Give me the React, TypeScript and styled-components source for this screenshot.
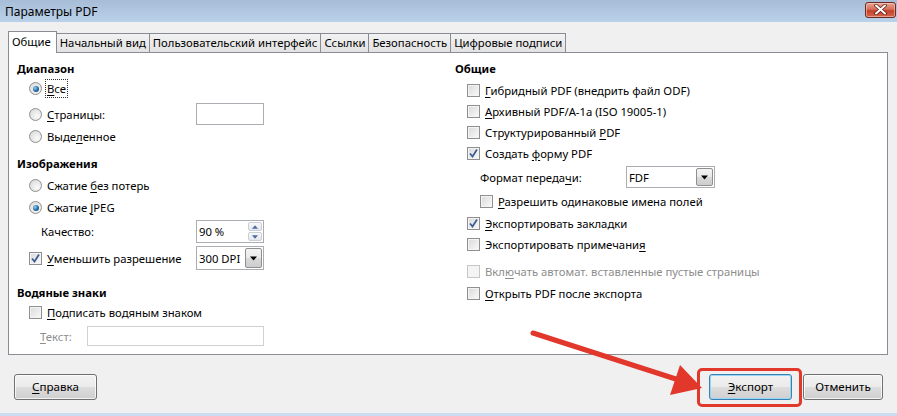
import * as React from "react"
import styled, { createGlobalStyle, css } from "styled-components"

const GlobalStyle = createGlobalStyle`
  html, body {
    margin: 0;
    padding: 0;
    background: #f0f0f0;
  }
  body {
    font-family: "Noto Sans", "Liberation Sans", sans-serif;
    font-size: 11.3px;
    color: #000;
  }
  u {
    text-decoration: underline;
    text-underline-offset: 2px;
  }
`

const Window = styled.div`
    position: relative;
    width: 897px;
    height: 416px;
    display: flex;
    flex-direction: column;
    overflow: hidden;
    background: #f0f0f0;
`

const TitleBar = styled.div`
    height: 22px;
    flex: 0 0 22px;
    display: flex;
    align-items: center;
    justify-content: space-between;
    padding: 0 1px 0 5px;
    font-size: 12px;
    background: linear-gradient(#a7bdd7, #bad1ea);
`

const CloseButton = styled.div`
    width: 31px;
    height: 16px;
    margin-top: -3px;
    box-sizing: border-box;
    border: 1px solid #6b2a22;
    border-radius: 3px;
    display: flex;
    align-items: center;
    justify-content: center;
    background: linear-gradient(#e8a493 0%, #d66f59 45%, #c44129 55%, #d4654c 100%);
    box-shadow: inset 0 0 0 1px rgba(255, 220, 210, 0.5);
`

const Body = styled.div`
    flex: 1;
    display: flex;
    flex-direction: column;
    padding: 8px 9px 0 8px;
`

const TabStrip = styled.div`
    height: 22px;
    display: flex;
    align-items: flex-end;
`

const Tab = styled.div<{ $active?: boolean }>`
    position: relative;
    box-sizing: border-box;
    height: 19px;
    padding: 0 3px 1px;
    margin-left: -1px;
    display: flex;
    align-items: center;
    border: 1px solid #898c95;
    border-bottom: none;
    background: linear-gradient(#f2f2f2, #e2e2e2);
    white-space: nowrap;

    &:first-child {
        margin-left: 0;
    }

    ${p => p.$active && css`
        height: 22px;
        margin-bottom: -1px;
        padding: 0 5px 3px 3px;
        background: #fff;
        z-index: 1;
    `}
`

const Panel = styled.div`
    box-sizing: border-box;
    height: 303px;
    flex: 0 0 303px;
    display: grid;
    grid-template-columns: 438px 1fr;
    padding: 6px 8px 0 8px;
    background: #fff;
    border: 1px solid #898c95;
`

const Column = styled.div`
    display: flex;
    flex-direction: column;
`

const Heading = styled.div<{ $mt?: number }>`
    height: 18px;
    display: flex;
    align-items: center;
    font-weight: bold;
    margin-top: ${p => p.$mt || 0}px;
`

const Row = styled.div<{ $h?: number; $mt?: number; $indent?: number }>`
    height: ${p => p.$h || 21}px;
    margin-top: ${p => p.$mt || 0}px;
    padding-left: ${p => p.$indent ?? 12}px;
    display: flex;
    align-items: center;
    white-space: nowrap;
`

const Lead = styled.div<{ $w: number }>`
    flex: 0 0 ${p => p.$w}px;
    display: flex;
    align-items: center;
`

const Label = styled.span<{ $disabled?: boolean; $focus?: boolean }>`
    margin-left: 5px;
    color: ${p => (p.$disabled ? "#8d8d8d" : "#000")};
    ${p => p.$focus && css`
        outline: 1px dotted #333;
        outline-offset: 1px;
    `}
`

const PlainLabel = styled.span<{ $disabled?: boolean }>`
    color: ${p => (p.$disabled ? "#8d8d8d" : "#000")};
`

const CheckBox = styled.span<{ $disabled?: boolean }>`
    box-sizing: border-box;
    width: 13px;
    height: 13px;
    flex: 0 0 13px;
    display: inline-flex;
    align-items: center;
    justify-content: center;
    border: 1px solid ${p => (p.$disabled ? "#c6c6c6" : "#8e8f8f")};
    background: ${p => (p.$disabled ? "#f4f4f4" : "linear-gradient(135deg, #d9d9d9, #fafafa)")};
    box-shadow: inset 0 0 0 1px #f4f4f4;
`

const RadioDot = styled.span<{ $checked?: boolean }>`
    box-sizing: border-box;
    width: 13px;
    height: 13px;
    flex: 0 0 13px;
    border-radius: 50%;
    display: inline-flex;
    align-items: center;
    justify-content: center;
    border: 1px solid #8e8f8f;
    background: radial-gradient(circle at 65% 65%, #fbfbfb, #d4d4d4);

    &::after {
        content: "";
        display: ${p => (p.$checked ? "block" : "none")};
        width: 6px;
        height: 6px;
        border-radius: 50%;
        background: radial-gradient(circle at 35% 35%, #8fd0f5, #1e5f97 60%, #123b64);
    }
`

const Field = styled.div<{ $w: number; $h: number; $disabled?: boolean }>`
    box-sizing: border-box;
    width: ${p => p.$w}px;
    height: ${p => p.$h}px;
    display: flex;
    align-items: center;
    padding-left: 2px;
    border: 1px solid ${p => (p.$disabled ? "#cfd0d3" : "#abadb3")};
    background: #fff;
`

const FieldText = styled.span`
    flex: 1;
    min-width: 0;
    overflow: hidden;
    white-space: nowrap;
`

const SpinButtons = styled.div`
    width: 15px;
    height: 100%;
    box-sizing: border-box;
    padding: 1px 1px 1px 0;
    display: flex;
    flex-direction: column;
    gap: 1px;
`

const SpinHalf = styled.div`
    flex: 1;
    display: flex;
    align-items: center;
    justify-content: center;
    border: 1px solid #c9cfd8;
    border-radius: 2px;
    background: linear-gradient(#f7f8fa, #e4e7ec);
`

const DropButton = styled.div`
    box-sizing: border-box;
    width: 17px;
    flex: 0 0 17px;
    align-self: stretch;
    margin: 1px;
    display: flex;
    align-items: center;
    justify-content: center;
    border: 1px solid #8e8f8f;
    border-radius: 2px;
    background: linear-gradient(#f3f3f3 0%, #e9e9e9 50%, #d9d9d9 51%, #cdcdcd 100%);
`

const Footer = styled.div`
    display: flex;
    align-items: center;
    padding: 19px 5px 0 6px;
    gap: 11px;
`

const Button = styled.button<{ $w: number; $default?: boolean }>`
    box-sizing: border-box;
    width: ${p => p.$w}px;
    height: 26px;
    padding: 0 0 1px;
    font: inherit;
    font-size: 11.6px;
    color: #000;
    border: 1px solid ${p => (p.$default ? "#3c7fb1" : "#707070")};
    border-radius: 3px;
    background: linear-gradient(#f2f2f2 0%, #ebebeb 50%, #dddddd 51%, #cfcfcf 100%);
    box-shadow: inset 0 0 0 1px ${p => (p.$default ? "#94d6f7" : "rgba(255, 255, 255, 0.75)")};
`

const Highlight = styled.div`
    position: relative;
    display: flex;
    margin-left: auto;

    &::after {
        content: "";
        position: absolute;
        left: -12px;
        right: -10px;
        top: -6px;
        bottom: -7px;
        border: 3px solid #e2372b;
        border-radius: 5px;
        pointer-events: none;
    }
`

const BottomEdge = styled.div`
    height: 3px;
    flex: 0 0 3px;
    background: #cbdcf0;
`

const Overlay = styled.svg`
    position: absolute;
    left: 0;
    top: 0;
    pointer-events: none;
`

const Check: React.FC<{ checked?: boolean; disabled?: boolean }> = ({ checked, disabled }) => (
    <CheckBox $disabled={disabled}>
        {checked && (
            <svg width="11" height="11" viewBox="0 0 11 11">
                <path d="M2 5.5 L4.5 8.5 L9 1.5" fill="none" stroke="#3b5b93" strokeWidth="1.7" />
            </svg>
        )}
    </CheckBox>
)

const Triangle: React.FC<{ up?: boolean; color?: string; size?: number }> = ({ up, color = "#000", size = 7 }) => (
    <svg width={size} height={Math.ceil(size / 2) + 1} viewBox="0 0 7 4">
        <path d={up ? "M0 4 L3.5 0 L7 4 Z" : "M0 0 L7 0 L3.5 4 Z"} fill={color} />
    </svg>
)

const Select: React.FC<{ w: number; h: number; value: string }> = ({ w, h, value }) => (
    <Field $w={w} $h={h}>
        <FieldText>{value}</FieldText>
        <DropButton>
            <Triangle />
        </DropButton>
    </Field>
)

export default function App() {
    return (
        <Window>
            <GlobalStyle />
            <TitleBar>
                <span>Параметры PDF</span>
                <CloseButton>
                    <svg width="13" height="11" viewBox="0 0 13 11">
                        <path d="M2 1.5 L11 9.5 M11 1.5 L2 9.5" stroke="#5a2018" strokeWidth="3.6" strokeLinecap="round" />
                        <path d="M2 1.5 L11 9.5 M11 1.5 L2 9.5" stroke="#fff" strokeWidth="2" strokeLinecap="round" />
                    </svg>
                </CloseButton>
            </TitleBar>

            <Body>
                <TabStrip>
                    <Tab $active>Общие</Tab>
                    <Tab>Начальный вид</Tab>
                    <Tab>Пользовательский интерфейс</Tab>
                    <Tab>Ссылки</Tab>
                    <Tab>Безопасность</Tab>
                    <Tab>Цифровые подписи</Tab>
                </TabStrip>

                <Panel>
                    <Column>
                        <Heading>Диапазон</Heading>
                        <Row $mt={1}>
                            <RadioDot $checked />
                            <Label $focus><u>В</u>се</Label>
                        </Row>
                        <Row $h={22} $mt={4}>
                            <Lead $w={167}>
                                <RadioDot />
                                <Label><u>С</u>траницы:</Label>
                            </Lead>
                            <Field $w={68} $h={22} />
                        </Row>
                        <Row $mt={1}>
                            <RadioDot />
                            <Label>Выде<u>л</u>енное</Label>
                        </Row>

                        <Heading $mt={7}>Изображения</Heading>
                        <Row $mt={3}>
                            <RadioDot />
                            <Label>Сжатие <u>б</u>ез потерь</Label>
                        </Row>
                        <Row $mt={1}>
                            <RadioDot $checked />
                            <Label>Сжатие <u>J</u>PEG</Label>
                        </Row>
                        <Row $h={23} $mt={2} $indent={24}>
                            <Lead $w={155}>
                                <PlainLabel>Качество:</PlainLabel>
                            </Lead>
                            <Field $w={68} $h={23}>
                                <FieldText>90 %</FieldText>
                                <SpinButtons>
                                    <SpinHalf><Triangle up color="#4f6a9c" size={6} /></SpinHalf>
                                    <SpinHalf><Triangle color="#4f6a9c" size={6} /></SpinHalf>
                                </SpinButtons>
                            </Field>
                        </Row>
                        <Row $h={24} $mt={3}>
                            <Lead $w={167}>
                                <Check checked />
                                <Label><u>У</u>меньшить разрешение</Label>
                            </Lead>
                            <Select w={68} h={24} value="300 DPI" />
                        </Row>

                        <Heading $mt={13}>Водяные знаки</Heading>
                        <Row $mt={1}>
                            <Check />
                            <Label><u>П</u>одписать водяным знаком</Label>
                        </Row>
                        <Row $h={20} $mt={3} $indent={23}>
                            <Lead $w={47}>
                                <PlainLabel $disabled><u>Т</u>екст:</PlainLabel>
                            </Lead>
                            <Field $w={177} $h={20} $disabled />
                        </Row>
                    </Column>

                    <Column>
                        <Heading>Общие</Heading>
                        <Row $mt={3}>
                            <Check />
                            <Label><u>Г</u>ибридный PDF (внедрить файл ODF)</Label>
                        </Row>
                        <Row>
                            <Check />
                            <Label><u>А</u>рхивный PDF/A-1a (ISO 19005-1)</Label>
                        </Row>
                        <Row>
                            <Check />
                            <Label>Структурированный <u>P</u>DF</Label>
                        </Row>
                        <Row>
                            <Check checked />
                            <Label>Создать <u>ф</u>орму PDF</Label>
                        </Row>
                        <Row $h={22} $mt={2} $indent={25}>
                            <Lead $w={146}>
                                <PlainLabel>Формат переда<u>ч</u>и:</PlainLabel>
                            </Lead>
                            <Select w={89} h={22} value="FDF" />
                        </Row>
                        <Row $mt={3} $indent={25}>
                            <Check />
                            <Label><u>Р</u>азрешить одинаковые имена полей</Label>
                        </Row>
                        <Row $mt={1}>
                            <Check checked />
                            <Label><u>Э</u>кспортировать закладки</Label>
                        </Row>
                        <Row>
                            <Check />
                            <Label>Экспортировать примечани<u>я</u></Label>
                        </Row>
                        <Row $mt={6}>
                            <Check disabled />
                            <Label $disabled>Вкл<u>ю</u>чать автомат. вставленные пустые страницы</Label>
                        </Row>
                        <Row $mt={1}>
                            <Check />
                            <Label><u>О</u>ткрыть PDF после экспорта</Label>
                        </Row>
                    </Column>
                </Panel>

                <Footer>
                    <Button $w={83}><u>С</u>правка</Button>
                    <Highlight>
                        <Button $w={83} $default><u>Э</u>кспорт</Button>
                    </Highlight>
                    <Button $w={80}>Отменить</Button>
                </Footer>
            </Body>

            <BottomEdge />

            <Overlay width="897" height="416" viewBox="0 0 897 416">
                <line x1="533" y1="333" x2="682" y2="381" stroke="#e2372b" strokeWidth="5" strokeLinecap="round" />
                <polygon points="702,388 680,365 670,395" fill="#e2372b" />
            </Overlay>
        </Window>
    )
}
